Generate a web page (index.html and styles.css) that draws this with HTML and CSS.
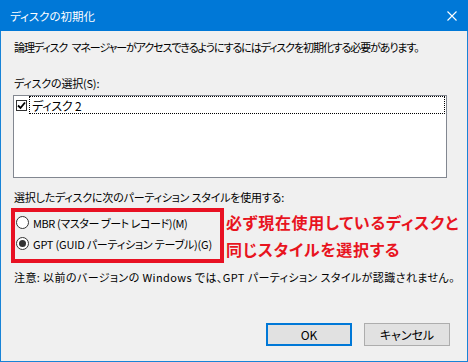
FILE: index.html
```html
<!DOCTYPE html>
<html lang="ja">
<head>
<meta charset="utf-8">
<link rel="stylesheet" href="styles.css">
</head>
<body>
<div class="window">
  <div class="titlebar">
    <span class="title">ディスクの初期化</span>
    <svg class="close" width="10" height="10" viewBox="0 0 10 10"><path d="M0.5 0.5L9.5 9.5M9.5 0.5L0.5 9.5" stroke="#fff" stroke-width="1.1" fill="none"/></svg>
  </div>
  <div class="content">
    <p class="intro">論理ディスク<span class="sp"> </span>マネージャーがアクセスできるようにするにはディスクを初期化する必要があります。</p>
    <p class="label">ディスクの選択(S):</p>
    <div class="listbox">
      <div class="item">
        <span class="checkbox"><svg width="9" height="9" viewBox="0 0 9 9"><path d="M1 4.5L3.5 7L8 1.5" stroke="#000" stroke-width="1.8" fill="none"/></svg></span>
        <span class="itemtext">ディスク 2</span>
      </div>
    </div>
    <p class="label2">選択したディスクに次のパーティション スタイルを使用する:</p>
    <div class="partition">
      <div class="radiobox">
        <div class="radio-row"><span class="radio"></span><span class="mbr">MBR (マスター ブート レコード)(M)</span></div>
        <div class="radio-row"><span class="radio checked"></span><span>GPT (GUID パーティション テーブル)(G)</span></div>
      </div>
      <div class="note-red">必ず現在使用しているディスクと<br>同じスタイルを選択する</div>
    </div>
    <p class="caution">注意: 以前のバージョンの Windows では、GPT パーティション スタイルが認識されません。</p>
    <div class="buttons">
      <button class="btn btn-default">OK</button>
      <button class="btn">キャンセル</button>
    </div>
  </div>
</div>
</body>
</html>
```

FILE: styles.css
```css
* { box-sizing: border-box; }
html, body { margin: 0; padding: 0; }
body {
  width: 468px;
  height: 362px;
  font-family: "Noto Sans CJK JP", "Noto Sans", sans-serif;
  font-size: 11px;
  letter-spacing: -0.2px;
  font-feature-settings: "palt";
  color: #000;
  background: #f0f0f0;
}
.window {
  width: 468px;
  height: 362px;
  border: 1px solid #1883d7;
  border-top: none;
  background: #f0f0f0;
  display: flex;
  flex-direction: column;
}
.titlebar {
  height: 31px;
  background: #0078d7;
  margin: 0 -1px;
  display: flex;
  align-items: center;
  justify-content: space-between;
  padding: 0 11px 0 10px;
  color: #fff;
  font-size: 11.5px;
  letter-spacing: 0;
}
.close { display: block; }
.content {
  padding: 0 0 0 12px;
  display: flex;
  flex-direction: column;
}
p { margin: 0; line-height: 16px; white-space: nowrap; }
.intro { margin-top: 8px; letter-spacing: -1.1px; padding-left: 1px; }
.intro .sp { letter-spacing: 2px; }
.label { margin-top: 20px; padding-left: 1px; }
.listbox {
  margin-top: 4px;
  width: 434px;
  height: 83px;
  background: #fff;
  border: 1px solid #828790;
  padding: 0;
}
.item {
  height: 18px;
  display: flex;
  align-items: center;
}
.checkbox {
  width: 11px;
  height: 11px;
  border: 1px solid #333;
  background: #fff;
  margin-left: 2px;
  margin-right: 2px;
  display: flex;
  align-items: center;
  justify-content: center;
  flex: none;
}
.checkbox svg { display: block; }
.itemtext {
  flex: 1;
  height: 18px;
  margin-right: 1px;
  border: 1px dotted #000;
  display: flex;
  align-items: center;
  padding-left: 2px;
  font-size: 12px;
}
.label2 { margin-top: 11px; padding-left: 1px; }
.partition {
  margin-top: 3px;
  margin-left: -2px;
  display: flex;
  align-items: flex-start;
}
.radiobox {
  width: 213px;
  height: 55px;
  border: 4px solid #e81123;
  padding: 0 0 0 1px;
  flex: none;
}
.radio-row {
  height: 21px;
  display: flex;
  align-items: center;
  gap: 4px;
  white-space: nowrap;
}
.mbr { letter-spacing: -0.4px; }
.radio {
  width: 13px;
  height: 13px;
  border: 1px solid #333;
  border-radius: 50%;
  background: #fff;
  flex: none;
  display: flex;
  align-items: center;
  justify-content: center;
}
.radio.checked::after {
  content: "";
  width: 7px;
  height: 7px;
  border-radius: 50%;
  background: #333;
}
.note-red {
  margin-left: 2px;
  margin-top: 1px;
  color: #e8141e;
  font-weight: bold;
  font-size: 16px;
  letter-spacing: 0.7px;
  line-height: 27px;
  white-space: nowrap;
}
.caution { margin-top: 6px; padding-left: 1px; letter-spacing: 0.4px; }
.buttons {
  margin-top: 38px;
  display: flex;
  justify-content: flex-end;
  gap: 12px;
  padding-right: 17px;
}
.btn {
  width: 86px;
  height: 23px;
  background: #e1e1e1;
  border: 1px solid #adadad;
  font-family: "Noto Sans CJK JP", "Noto Sans", sans-serif;
  font-size: 12px;
  font-feature-settings: "palt";
  color: #000;
  padding: 0;
  line-height: 1;
}
.btn-default { border: 2px solid #0078d7; }
```
